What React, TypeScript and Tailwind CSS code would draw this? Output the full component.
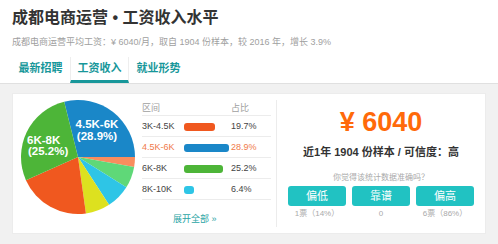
import React from 'react';

const font = '[font-family:"Liberation_Sans","Noto_Sans_CJK_SC",sans-serif]';

type Slice = { from: number; to: number; color: string };

const slices: Slice[] = [
  { from: -14, to: 90, color: '#1a87c8' },
  { from: 90, to: 100, color: '#f98d5e' },
  { from: 100, to: 122, color: '#5fd878' },
  { from: 122, to: 147, color: '#2ec5e6' },
  { from: 147, to: 172, color: '#dde11f' },
  { from: 172, to: 246, color: '#f0581f' },
  { from: 246, to: 346, color: '#4db538' },
];

const rows = [
  { range: '3K-4.5K', bar: 31, color: '#f0581f', pct: '19.7%', hot: false },
  { range: '4.5K-6K', bar: 45, color: '#1a87c8', pct: '28.9%', hot: true },
  { range: '6K-8K', bar: 39, color: '#4db538', pct: '25.2%', hot: false },
  { range: '8K-10K', bar: 10, color: '#2ec5e6', pct: '6.4%', hot: false },
];

const votes = [
  { label: '偏低', count: '1票（14%）' },
  { label: '靠谱', count: '0' },
  { label: '偏高', count: '6票（86%）' },
];

const point = (a: number, cx: number, cy: number, r: number) => {
  const rad = (a * Math.PI) / 180;
  return `${cx + r * Math.sin(rad)} ${cy - r * Math.cos(rad)}`;
};

const PieChart: React.FC = () => {
  const cx = 78;
  const cy = 156;
  const r = 57;
  return (
    <svg width="130" height="141" viewBox="12 93 130 141" className="shrink-0">
      {slices.map((s, i) => (
        <path
          key={i}
          d={`M${cx} ${cy} L${point(s.from, cx, cy, r)} A${r} ${r} 0 ${s.to - s.from > 180 ? 1 : 0} 1 ${point(s.to, cx, cy, r)} Z`}
          fill={s.color}
        />
      ))}
      <g fill="#fff" fontFamily="Liberation Sans, sans-serif" fontWeight="bold" fontSize="11.5">
        <text x="97" y="127" textAnchor="middle">4.5K-6K</text>
        <text x="97" y="139" textAnchor="middle">(28.9%)</text>
        <text x="27" y="143">6K-8K</text>
        <text x="28" y="154">(25.2%)</text>
      </g>
    </svg>
  );
};

export default function App() {
  return (
    <div className={`w-[498px] h-[244px] overflow-hidden bg-[#f1f1f1] ${font}`}>
      {/* header */}
      <div className="bg-white border-b border-[#e0e0e0] pt-[8px]">
        <h1 className="px-3 text-[16px] leading-[20px] font-bold text-[#333]">成都电商运营 • 工资收入水平</h1>
        <p className="px-3 mt-[7px] text-[9px] leading-[14px] text-[#a0a0a0]">
          成都电商运营平均工资：¥ 6040/月，取自 1904 份样本，较 2016 年，增长 3.9%
        </p>
        <div className="flex pl-[11px] mt-[8px] h-[26px] text-[11px] font-bold text-[#17979a]">
          <div className="w-[59px] flex items-center justify-center pb-[3px]">最新招聘</div>
          <div className="w-[59px] flex items-center justify-center border-x border-[#eeeeee] border-b-[3px] border-b-[#17979a]">
            工资收入
          </div>
          <div className="w-[59px] flex items-center justify-center pb-[3px]">就业形势</div>
        </div>
      </div>

      {/* card */}
      <div className="px-3 pt-[9px]">
        <div className="flex h-[141px] bg-white border border-[#ececec]">
          <div className="flex w-[264px] -ml-px">
            <PieChart />
            <div className="flex flex-col pt-[6px] w-[129px] text-[9px]">
              <div className="flex h-[16px] items-center pt-[2px] border-b border-[#ececec] text-[#a0a0a0]">
                <span className="w-[89px]">区间</span>
                <span>占比</span>
              </div>
              {rows.map((row) => (
                <div key={row.range} className="flex h-[21px] items-center pt-[2px] border-b border-[#ececec]">
                  <span className={`w-[42px] ${row.hot ? 'text-[#f07a4a]' : 'text-[#444]'}`}>{row.range}</span>
                  <div className="w-[47px]">
                    <div className="h-[8px] rounded-[3px]" style={{ width: row.bar, backgroundColor: row.color }} />
                  </div>
                  <span className={row.hot ? 'text-[#f07a4a]' : 'text-[#444]'}>{row.pct}</span>
                </div>
              ))}
              <div className="pl-[31px] mt-[13px] text-[#2aa5a5]">展开全部 »</div>
            </div>
          </div>

          <div className="my-[6px] border-l border-[#ececec]" />

          <div className="flex-1 flex flex-col items-center">
            <div className="mt-[12px] text-[27px] leading-[32px] font-bold text-[#ff6a0a]">¥ 6040</div>
            <div className="mt-[7px] text-[11px] leading-[14px] font-bold text-[#333]">近1年 1904 份样本 / 可信度：高</div>
            <div className="mt-[14px] text-[8px] leading-[10px] text-[#aaa]">你觉得该统计数据准确吗？</div>
            <div className="mt-[3px] flex gap-[6px]">
              {votes.map((v) => (
                <div key={v.label} className="w-[58px] flex flex-col items-center">
                  <div className="w-full h-[20px] rounded-[3px] bg-[#21c2c2] text-white text-[11px] flex items-center justify-center">
                    {v.label}
                  </div>
                  <div className="mt-[2px] text-[8px] leading-[12px] text-[#aaa]">{v.count}</div>
                </div>
              ))}
            </div>
          </div>
        </div>
      </div>
    </div>
  );
}
